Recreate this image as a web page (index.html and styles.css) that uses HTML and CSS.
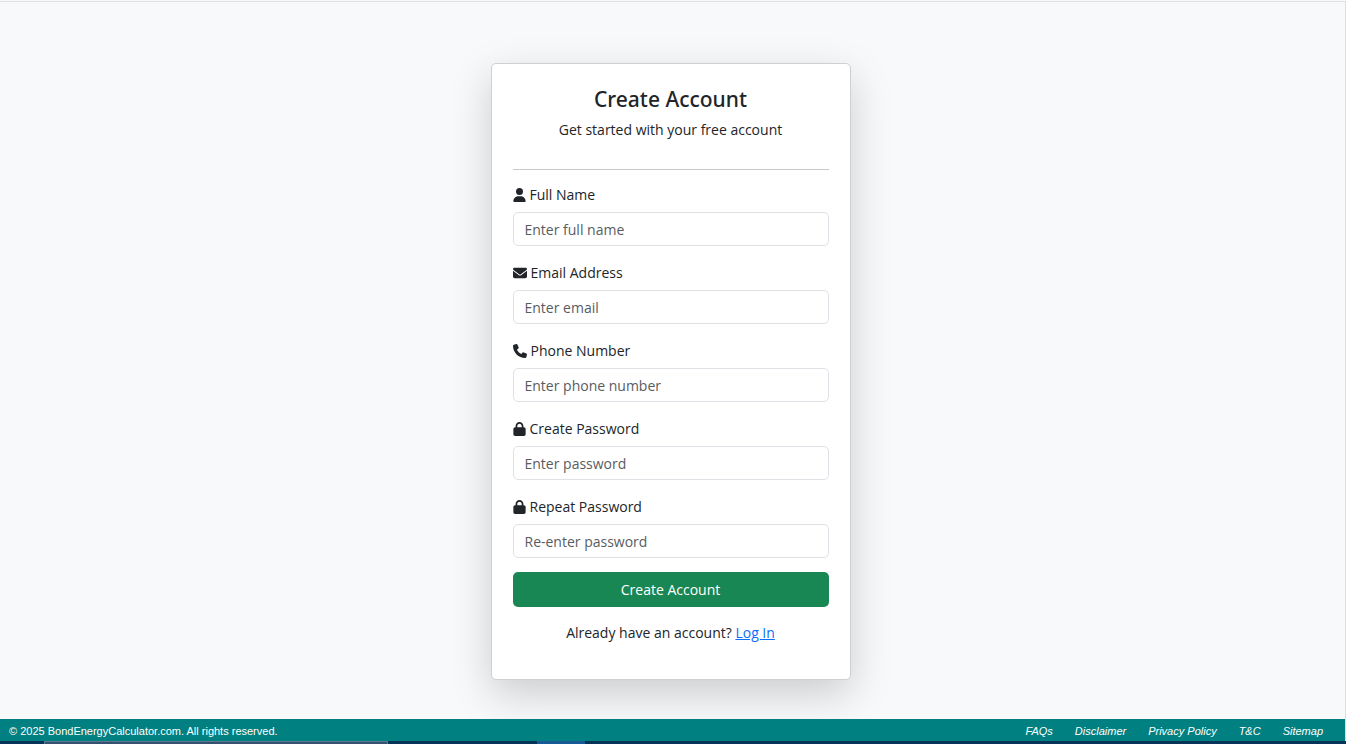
FILE: index.html
```html
<!DOCTYPE html>
<html lang="en">
<head>
  <meta charset="UTF-8">
  <meta name="viewport" content="width=device-width, initial-scale=1.0">
  <title>Create Account</title>
  <link rel="stylesheet" href="styles.css">
</head>
<body>

  <main class="page">
    <div class="card">
      <h1 class="title">Create Account</h1>
      <p class="subtitle">Get started with your free account</p>
      <hr>
      <form>
        <div class="form-group">
          <label for="fullName"><svg class="icon" viewBox="0 0 448 512"><path d="M224 256A128 128 0 1 0 224 0a128 128 0 1 0 0 256zm-45.700 48C79.800 304 0 383.800 0 482.300 0 498.700 13.300 512 29.700 512h388.600c16.400 0 29.700-13.300 29.700-29.700C448 383.800 368.200 304 269.700 304z"/></svg>Full Name</label>
          <input type="text" id="fullName" name="name" placeholder="Enter full name">
        </div>
        <div class="form-group">
          <label for="email"><svg class="icon icon-wide" viewBox="0 0 512 512"><path d="M48 64C21.500 64 0 85.500 0 112c0 15.100 7.100 29.300 19.200 38.400l217.600 163.200c11.400 8.500 27 8.500 38.400 0l217.600-163.200c12.100-9.100 19.200-23.300 19.200-38.400 0-26.500-21.500-48-48-48zM0 176v208c0 35.300 28.700 64 64 64h384c35.300 0 64-28.700 64-64V176L294.400 339.200c-22.800 17.100-54 17.100-76.800 0z"/></svg>Email Address</label>
          <input type="email" id="email" name="email" placeholder="Enter email">
        </div>
        <div class="form-group">
          <label for="phone"><svg class="icon icon-wide" viewBox="0 0 512 512"><path d="M164.900 24.600c-7.700-18.600-28-28.500-47.400-23.200l-88 24C12.100 30.200 0 46 0 64c0 247.400 200.600 448 448 448 18 0 33.800-12.100 38.600-29.500l24-88c5.300-19.400-4.600-39.700-23.200-47.400l-96-40c-16.300-6.800-35.200-2.100-46.300 11.600L304.700 368C234.300 334.700 177.300 277.700 144 207.300l49.300-40.300c13.700-11.200 18.400-30 11.600-46.300z"/></svg>Phone Number</label>
          <input type="tel" id="phone" name="phone" placeholder="Enter phone number">
        </div>
        <div class="form-group">
          <label for="password"><svg class="icon" viewBox="0 0 448 512"><path d="M144 144v48h160v-48c0-44.200-35.800-80-80-80s-80 35.800-80 80zm-64 48v-48C80 64.500 144.500 0 224 0s144 64.500 144 144v48h16c35.300 0 64 28.700 64 64v192c0 35.300-28.700 64-64 64H64c-35.300 0-64-28.700-64-64V256c0-35.300 28.700-64 64-64z"/></svg>Create Password</label>
          <input type="password" id="password" name="password" placeholder="Enter password">
        </div>
        <div class="form-group">
          <label for="repeatPassword"><svg class="icon" viewBox="0 0 448 512"><path d="M144 144v48h160v-48c0-44.200-35.800-80-80-80s-80 35.800-80 80zm-64 48v-48C80 64.500 144.500 0 224 0s144 64.500 144 144v48h16c35.300 0 64 28.700 64 64v192c0 35.300-28.700 64-64 64H64c-35.300 0-64-28.700-64-64V256c0-35.300 28.700-64 64-64z"/></svg>Repeat Password</label>
          <input type="password" id="repeatPassword" name="repeat_password" placeholder="Re-enter password">
        </div>
        <button type="submit" class="btn">Create Account</button>
        <p class="login">Already have an account? <a href="#">Log In</a></p>
      </form>
    </div>
  </main>

  <footer class="footer">
    <span>© 2025 BondEnergyCalculator.com. All rights reserved.</span>
    <nav class="footer-links">
      <a href="#">FAQs</a>
      <a href="#">Disclaimer</a>
      <a href="#">Privacy Policy</a>
      <a href="#">T&amp;C</a>
      <a href="#">Sitemap</a>
    </nav>
  </footer>

  <div class="taskbar">
    <div class="taskbar-search"></div>
    <div class="taskbar-active"></div>
  </div>

</body>
</html>
```
FILE: styles.css
```css
* {
  box-sizing: border-box;
  margin: 0;
  padding: 0;
}
body {
  display: flex;
  flex-direction: column;
  min-height: 100vh;
  background-color: #f8f9fa;
  color: #212529;
  font: 14px/21px "Open Sans", "Noto Sans", sans-serif;
}
.page {
  flex: 1;
  margin-top: 1px;
  padding: 61px 24px 39px 20px;
  border-top: 1px solid #dee2e6;
  border-right: 1px solid #d5dfee;
}
.card {
  max-width: 360px;
  margin: 0 auto;
  padding: 21px;
  background-color: #fff;
  border: 1px solid #cfd0d1;
  border-radius: 5px;
  box-shadow: 0 14px 42px rgba(0, 0, 0, 0.18);
}
.title {
  margin-bottom: 6px;
  font-family: "Noto Sans", sans-serif;
  font-size: 21px;
  font-weight: 500;
  line-height: 28px;
  text-align: center;
}
.subtitle {
  margin-bottom: 29px;
  text-align: center;
}
hr {
  margin-bottom: 14px;
  border: 0;
  border-top: 1px solid #c8c9ca;
}
.form-group {
  margin-bottom: 16px;
}
.form-group:last-of-type {
  margin-bottom: 14px;
}
label {
  display: flex;
  align-items: center;
  gap: 4px;
  margin-bottom: 7px;
}
.icon {
  width: 13px;
  height: 14px;
  fill: #212529;
}
.icon-wide {
  width: 14px;
}
input {
  display: block;
  width: 100%;
  height: 34px;
  padding: 0 11px;
  background-color: #fff;
  border: 1px solid #dee2e6;
  border-radius: 5px;
  color: #212529;
  font: inherit;
}
input::placeholder {
  color: #595c5f;
}
.btn {
  display: block;
  width: 100%;
  height: 35px;
  background-color: #198754;
  border: 0;
  border-radius: 5px;
  color: #fff;
  font: inherit;
  cursor: pointer;
}
.btn:hover {
  background-color: #157347;
}
.login {
  margin: 15px 0;
  text-align: center;
}
.login a {
  color: #0d6efd;
}
.footer {
  display: flex;
  flex-wrap: wrap;
  justify-content: space-between;
  padding: 2px 22px 0 9px;
  background-color: #008080;
  border-right: 1px solid #d5dfee;
  color: #fff;
  font-family: "Liberation Sans", Arial, sans-serif;
  font-size: 11px;
  line-height: 20px;
}
.footer-links {
  display: flex;
  gap: 22px;
  font-style: italic;
}
.footer-links a {
  color: #fff;
  text-decoration: none;
}
.taskbar {
  display: flex;
  height: 3px;
  padding-left: 44px;
  background-color: #063458;
}
.taskbar-search {
  width: 344px;
  margin-right: 149px;
  background-color: #34526f;
  border: 1px solid #5b7890;
  border-bottom: 0;
}
.taskbar-active {
  width: 48px;
  background-color: #175a96;
}
```
